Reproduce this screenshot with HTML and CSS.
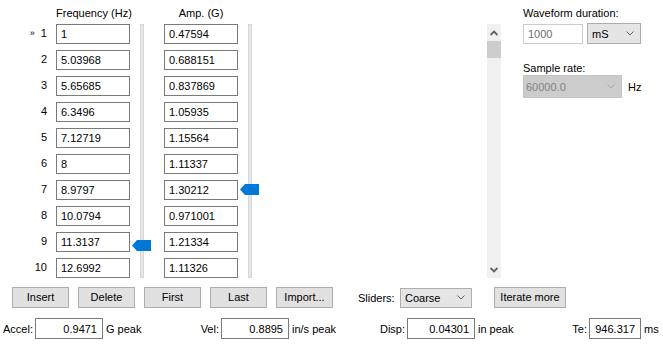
FILE: index.html
```html
<!DOCTYPE html>
<html>
<head>
<meta charset="utf-8">
<link rel="stylesheet" href="styles.css">
</head>
<body>
<div class="app">
  <div class="main">
    <div class="table">
      <div class="corner"></div>
      <div class="hdr col-freq">Frequency (Hz)</div>
      <div class="hdr col-amp">Amp. (G)</div>

      <div class="num"><span class="cur">»</span> 1</div>
      <input class="cell col-freq" value="1"><input class="cell col-amp" value="0.47594">
      <div class="num">2</div>
      <input class="cell col-freq" value="5.03968"><input class="cell col-amp" value="0.688151">
      <div class="num">3</div>
      <input class="cell col-freq" value="5.65685"><input class="cell col-amp" value="0.837869">
      <div class="num">4</div>
      <input class="cell col-freq" value="6.3496"><input class="cell col-amp" value="1.05935">
      <div class="num">5</div>
      <input class="cell col-freq" value="7.12719"><input class="cell col-amp" value="1.15564">
      <div class="num">6</div>
      <input class="cell col-freq" value="8"><input class="cell col-amp" value="1.11337">
      <div class="num">7</div>
      <input class="cell col-freq" value="8.9797"><input class="cell col-amp" value="1.30212">
      <div class="num">8</div>
      <input class="cell col-freq" value="10.0794"><input class="cell col-amp" value="0.971001">
      <div class="num">9</div>
      <input class="cell col-freq" value="11.3137"><input class="cell col-amp" value="1.21334">
      <div class="num">10</div>
      <input class="cell col-freq" value="12.6992"><input class="cell col-amp" value="1.11326">

      <div class="slider slider-freq">
        <div class="track"></div>
        <svg class="thumb" style="top:216px" width="19" height="11" viewBox="0 0 19 11"><polygon points="0,5.5 5,0 19,0 19,11 5,11" fill="#0078d7"/></svg>
      </div>
      <div class="slider slider-amp">
        <div class="track"></div>
        <svg class="thumb" style="top:160px" width="19" height="11" viewBox="0 0 19 11"><polygon points="0,5.5 5,0 19,0 19,11 5,11" fill="#0078d7"/></svg>
      </div>
    </div>

    <div class="scrollbar">
      <div class="sb-btn"><svg width="8" height="6" viewBox="0 0 8 6"><polyline points="0.5,5 4,1.5 7.5,5" fill="none" stroke="#606060" stroke-width="1.8"/></svg></div>
      <div class="sb-thumb"></div>
      <div class="sb-space"></div>
      <div class="sb-btn"><svg width="8" height="6" viewBox="0 0 8 6"><polyline points="0.5,1 4,4.5 7.5,1" fill="none" stroke="#606060" stroke-width="1.8"/></svg></div>
    </div>

    <div class="side">
      <div class="label">Waveform duration:</div>
      <div class="dur-row">
        <input class="dur" value="1000" readonly>
        <div class="combo combo-ms"><span>mS</span><svg width="8" height="5" viewBox="0 0 8 5"><polyline points="0.5,0.5 4,4 7.5,0.5" fill="none" stroke="#606060" stroke-width="1"/></svg></div>
      </div>
      <div class="label label-rate">Sample rate:</div>
      <div class="rate-row">
        <div class="combo combo-disabled"><span>60000.0</span><svg width="8" height="5" viewBox="0 0 8 5"><polyline points="0.5,0.5 4,4 7.5,0.5" fill="none" stroke="#a8a8a8" stroke-width="1"/></svg></div>
        <span class="unit-hz">Hz</span>
      </div>
    </div>
  </div>

  <div class="buttons">
    <div class="btn">Insert</div>
    <div class="btn">Delete</div>
    <div class="btn">First</div>
    <div class="btn">Last</div>
    <div class="btn">Import...</div>
    <div class="sliders-label">Sliders:</div>
    <div class="combo combo-sliders"><span>Coarse</span><svg width="8" height="5" viewBox="0 0 8 5"><polyline points="0.5,0.5 4,4 7.5,0.5" fill="none" stroke="#606060" stroke-width="1"/></svg></div>
    <div class="btn btn-iterate">Iterate more</div>
  </div>

  <div class="status">
    <div class="s-label">Accel:</div><input class="s-input" value="0.9471"><div class="s-unit">G peak</div>
    <div class="s-label">Vel:</div><input class="s-input" value="0.8895"><div class="s-unit">in/s peak</div>
    <div class="s-label">Disp:</div><input class="s-input" value="0.04301"><div class="s-unit">in peak</div>
    <div class="s-label">Te:</div><input class="s-input s-te" value="946.317"><div class="s-unit">ms</div>
  </div>
</div>
</body>
</html>
```

FILE: styles.css
```css
* { box-sizing: border-box; }
html, body { margin: 0; padding: 0; background: #ffffff; }
body {
  font-family: "Liberation Sans", Arial, sans-serif;
  font-size: 11px;
  color: #000;
  width: 663px;
  height: 360px;
  overflow: hidden;
}
input {
  font-family: "Liberation Sans", Arial, sans-serif;
  font-size: 11px;
  color: #000;
  margin: 0;
  outline: none;
}

.main {
  display: flex;
  height: 278px;
}

/* ---------- data table ---------- */
.table {
  display: grid;
  grid-template-columns: 47px 9px 74px 34px 74px 26px;
  grid-template-rows: 18px repeat(10, 20px);
  row-gap: 6px;
  width: 264px;
}
.corner { grid-row: 1; grid-column: 1; }
.hdr {
  grid-row: 1;
  text-align: center;
  padding-top: 7px;
  line-height: 13px;
  white-space: nowrap;
}
.col-freq { grid-column: 3; }
.col-amp { grid-column: 5; }
.num {
  grid-column: 1;
  text-align: right;
  line-height: 18px;
  white-space: nowrap;
}
.cur { font-size: 9px; margin-right: 3px; position: relative; top: -1px; }
.cell {
  height: 20px;
  width: 74px;
  border: 1px solid #7a7a7a;
  padding: 0 0 0 4px;
  background: #fff;
}
.slider {
  grid-row: 2 / 12;
  position: relative;
}
.slider-freq { grid-column: 4; }
.slider-amp { grid-column: 6; }
.track {
  margin-left: 10px;
  width: 4px;
  height: 254px;
  background: #e7e7e7;
  border: 1px solid #d8d8d8;
}
.thumb {
  position: absolute;
  left: 2px;
  display: block;
}

/* ---------- scrollbar ---------- */
.scrollbar {
  margin-left: auto;
  margin-top: 24px;
  width: 14px;
  height: 254px;
  background: #f0f0f0;
  display: flex;
  flex-direction: column;
}
.sb-btn {
  height: 17px;
  display: flex;
  align-items: center;
  justify-content: center;
}
.sb-btn svg { display: block; }
.sb-thumb { height: 17px; background: #cdcdcd; }
.sb-space { flex: 1; }

/* ---------- side panel ---------- */
.side {
  margin-left: 22px;
  width: 140px;
  padding-top: 7px;
}
.label { line-height: 13px; white-space: nowrap; }
.dur-row {
  display: flex;
  align-items: flex-end;
  gap: 4px;
  margin-top: 3px;
}
.dur {
  width: 60px;
  height: 20px;
  border: 1px solid #cccccc;
  color: #6d6d6d;
  padding: 0 0 0 4px;
}
.combo {
  display: flex;
  align-items: center;
  justify-content: space-between;
  background: #e5e5e5;
  border: 1px solid #adadad;
  padding: 0 6px 0 4px;
}
.combo svg { display: block; }
.combo-ms { width: 54px; height: 21px; }
.label-rate { margin-top: 18px; }
.rate-row {
  display: flex;
  align-items: center;
  gap: 6px;
}
.combo-disabled {
  width: 99px;
  height: 23px;
  background: #cccccc;
  border-color: #c4c4c4;
  color: #838383;
  padding-left: 2px;
}

/* ---------- buttons ---------- */
.buttons {
  display: flex;
  align-items: center;
  margin-top: 9px;
  padding-left: 12px;
  height: 21px;
}
.btn {
  width: 57px;
  height: 21px;
  line-height: 19px;
  text-align: center;
  background: #e1e1e1;
  border: 1px solid #adadad;
  margin-right: 9px;
  white-space: nowrap;
}
.sliders-label { margin-left: 16px; width: 42px; }
.combo-sliders { width: 72px; height: 20px; }
.btn-iterate { width: 72px; margin-left: 22px; }

/* ---------- status line ---------- */
.status {
  display: grid;
  grid-template-columns: 35px 68px 97px 21px 68px 96px 22px 68px 90px 24px 52px auto;
  align-items: center;
  margin-top: 10px;
  height: 21px;
}
.s-label {
  display: flex;
  justify-content: flex-end;
  padding-right: 2px;
  white-space: nowrap;
}
.s-input {
  width: 100%;
  height: 21px;
  border: 1px solid #7a7a7a;
  text-align: right;
  padding: 0 5px 0 0;
  background: #fff;
}
.s-unit { padding-left: 3px; white-space: nowrap; }
```
